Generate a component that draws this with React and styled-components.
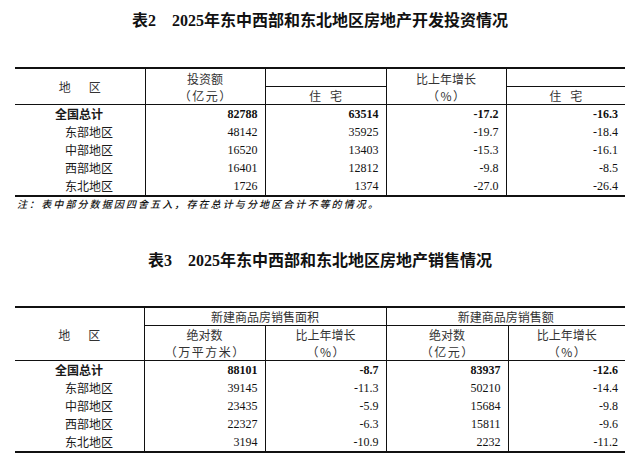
import styled, { createGlobalStyle } from 'styled-components';

const GlobalStyle = createGlobalStyle`
    body{
        margin: 0;
        background: #fff;
        font-family: "Noto Sans CJK SC", "Noto Sans", sans-serif;
        color: #111;
    }
`;

const investRows = [
    { name: '全国总计', total: true, a: '82788', b: '63514', c: '-17.2', d: '-16.3' },
    { name: '东部地区', a: '48142', b: '35925', c: '-19.7', d: '-18.4' },
    { name: '中部地区', a: '16520', b: '13403', c: '-15.3', d: '-16.1' },
    { name: '西部地区', a: '16401', b: '12812', c: '-9.8', d: '-8.5' },
    { name: '东北地区', a: '1726', b: '1374', c: '-27.0', d: '-26.4' },
];

const salesRows = [
    { name: '全国总计', total: true, a: '88101', b: '-8.7', c: '83937', d: '-12.6' },
    { name: '东部地区', a: '39145', b: '-11.3', c: '50210', d: '-14.4' },
    { name: '中部地区', a: '23435', b: '-5.9', c: '15684', d: '-9.8' },
    { name: '西部地区', a: '22327', b: '-6.3', c: '15811', d: '-9.6' },
    { name: '东北地区', a: '3194', b: '-10.9', c: '2232', d: '-11.2' },
];

export default function App(){
    return(
        <Page>
            <GlobalStyle/>
            <Title $top={11}>表2　2025年东中西部和东北地区房地产开发投资情况</Title>
            <Table $top={36}>
                <colgroup>
                    <col style={{width: 130}}/>
                    <col style={{width: 120}}/>
                    <col style={{width: 121}}/>
                    <col style={{width: 120}}/>
                    <col style={{width: 119}}/>
                </colgroup>
                <thead>
                    <tr>
                        <HeadCell rowSpan={2}><Spaced $gap={18}>地区</Spaced></HeadCell>
                        <HeadCell rowSpan={2}>投资额<br/><Paren>（亿元）</Paren></HeadCell>
                        <HeadCell/>
                        <HeadCell rowSpan={2}>比上年增长<br/><Paren>（%）</Paren></HeadCell>
                        <HeadCell/>
                    </tr>
                    <tr>
                        <HeadCell><Spaced $gap={9}>住宅</Spaced></HeadCell>
                        <HeadCell><Spaced $gap={9}>住宅</Spaced></HeadCell>
                    </tr>
                </thead>
                <tbody>
                    {investRows.map((row, key)=>
                        <tr key={key}>
                            <LabelCell $total={row.total}>{row.name}</LabelCell>
                            <NumCell $total={row.total}>{row.a}</NumCell>
                            <NumCell $total={row.total}>{row.b}</NumCell>
                            <NumCell $total={row.total}>{row.c}</NumCell>
                            <NumCell $total={row.total}>{row.d}</NumCell>
                        </tr>
                    )}
                </tbody>
            </Table>
            <Note>注：表中部分数据因四舍五入，存在总计与分地区合计不等的情况。</Note>
            <Title $top={41}>表3　2025年东中西部和东北地区房地产销售情况</Title>
            <Table $top={35}>
                <colgroup>
                    <col style={{width: 129}}/>
                    <col style={{width: 121}}/>
                    <col style={{width: 121}}/>
                    <col style={{width: 122}}/>
                    <col style={{width: 117}}/>
                </colgroup>
                <thead>
                    <tr>
                        <HeadCell rowSpan={2}><Spaced $gap={18}>地区</Spaced></HeadCell>
                        <HeadCell colSpan={2}>新建商品房销售面积</HeadCell>
                        <HeadCell colSpan={2}>新建商品房销售额</HeadCell>
                    </tr>
                    <tr>
                        <HeadCell $tall>绝对数<br/><Paren>（万平方米）</Paren></HeadCell>
                        <HeadCell $tall>比上年增长<br/><Paren>（%）</Paren></HeadCell>
                        <HeadCell $tall>绝对数<br/><Paren>（亿元）</Paren></HeadCell>
                        <HeadCell $tall>比上年增长<br/><Paren>（%）</Paren></HeadCell>
                    </tr>
                </thead>
                <tbody>
                    {salesRows.map((row, key)=>
                        <tr key={key}>
                            <LabelCell $total={row.total}>{row.name}</LabelCell>
                            <NumCell $total={row.total}>{row.a}</NumCell>
                            <NumCell $total={row.total}>{row.b}</NumCell>
                            <NumCell $total={row.total}>{row.c}</NumCell>
                            <NumCell $total={row.total}>{row.d}</NumCell>
                        </tr>
                    )}
                </tbody>
            </Table>
        </Page>
    )
}

const Page = styled.div`
    width: 640px;
    height: 470px;
    padding: 0 15px;
    box-sizing: border-box;
    display: flex;
    flex-direction: column;
    overflow: hidden;
`;

const Title = styled.h2`
    margin: ${p => p.$top}px 0 0;
    font-family: "Liberation Serif", "Noto Sans CJK SC", serif;
    font-size: 16px;
    line-height: 20px;
    font-weight: bold;
    text-align: center;
    color: #111;
`;

const Table = styled.table`
    margin-top: ${p => p.$top}px;
    width: 610px;
    table-layout: fixed;
    border-collapse: collapse;
    border-top: 2px solid #111;
    border-bottom: 2px solid #111;
    tbody tr:first-child td{
        border-top: 1px solid #111;
    }
`;

const HeadCell = styled.th`
    padding: 0;
    height: ${p => p.$tall ? 34 : 17}px;
    font-size: 12px;
    line-height: 17px;
    font-weight: normal;
    color: #333;
    text-align: center;
    border-left: 1px solid #111;
    border-bottom: 1px solid #111;
    &:first-child{
        border-left: none;
    }
    tr + tr &:first-child{
        border-left: 1px solid #111;
    }
`;

const Paren = styled.span`
    letter-spacing: 1.5px;
    margin-right: -1.5px;
`;

const Spaced = styled.span`
    letter-spacing: ${p => p.$gap}px;
    margin-right: -${p => p.$gap}px;
`;

const LabelCell = styled.td`
    padding: 0 0 0 ${p => p.$total ? 40 : 50}px;
    height: 18px;
    font-size: 12px;
    line-height: 18px;
    font-weight: ${p => p.$total ? 'bold' : 'normal'};
    color: #1a1a1a;
    white-space: nowrap;
`;

const NumCell = styled.td`
    padding: 0 7px 0 0;
    height: 18px;
    font-family: "Liberation Serif", serif;
    font-size: 12px;
    line-height: 18px;
    font-weight: ${p => p.$total ? 'bold' : 'normal'};
    color: #111;
    text-align: right;
    border-left: 1px solid #111;
`;

const Note = styled.p`
    margin: 1px 0 0 2px;
    font-size: 10px;
    line-height: 12px;
    letter-spacing: 2.1px;
    font-style: italic;
    font-weight: 500;
    color: #111;
    white-space: nowrap;
`;
